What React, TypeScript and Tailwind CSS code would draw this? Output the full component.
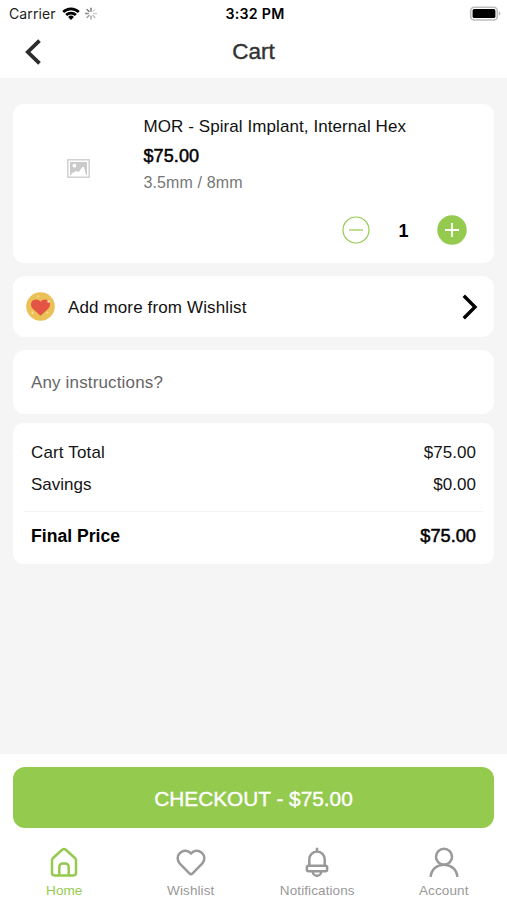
import { useState } from "react";

const PRICE = 75;

const money = (value: number) => `$${value.toFixed(2)}`;

function StatusBar() {
  return (
    <div className="grid h-[27px] grid-cols-3 items-center pr-[6px] pl-[9px] font-[Inter,sans-serif] text-[14px] text-[#222]">
      <div className="flex items-center">
        <span className="w-[53px] tracking-[0.1px]">Carrier</span>
        <svg className="h-[14px] w-[18px]" viewBox="0 0 18 14">
          <path d="M0.3 4.1a12.3 12.3 0 0 1 17.4 0l-1.8 1.9a9.8 9.8 0 0 0-13.8 0z" fill="#000" />
          <path d="M3.2 7.1a8.2 8.2 0 0 1 11.6 0l-1.9 1.9a5.5 5.5 0 0 0-7.8 0z" fill="#000" />
          <path d="M6.1 10a4.1 4.1 0 0 1 5.8 0L9 12.9z" fill="#000" />
        </svg>
        <svg className="ml-[4px] h-[14px] w-[14px]" viewBox="0 0 14 14" strokeWidth="1.4" strokeLinecap="round">
          <path d="M7 1.2v3" stroke="#777" />
          <path d="M10.9 2.6 9 4.5" stroke="#ddd" />
          <path d="M12.5 6.5H9.8" stroke="#ccc" />
          <path d="M10.9 10.4 9 8.5" stroke="#bbb" />
          <path d="M7 12V9.3" stroke="#aaa" />
          <path d="M3.1 10.4 5 8.5" stroke="#999" />
          <path d="M1.5 6.5h2.7" stroke="#888" />
          <path d="M3.1 2.6 5 4.5" stroke="#777" />
        </svg>
      </div>
      <span className="text-center text-[14.2px] font-semibold tracking-[0.25px] whitespace-nowrap text-black">3:32 PM</span>
      <svg className="h-[16px] w-[32px] justify-self-end" viewBox="0 0 32 16">
        <rect x="1.7" y="1.2" width="26.6" height="12.8" rx="3.6" fill="#fff" stroke="#bdbdbd" strokeWidth="1.6" />
        <rect x="3.6" y="3.1" width="22.8" height="9" rx="1.6" fill="#000" />
        <path d="M29.8 5.6v4c1.2-.3 1.6-1.1 1.6-2s-.4-1.7-1.6-2z" fill="#bbb" />
      </svg>
    </div>
  );
}

function Header() {
  return (
    <header className="grid h-[51px] grid-cols-3 items-center pb-[2px]">
      <button className="ml-[24px] w-fit" aria-label="Back">
        <svg className="block h-[28px] w-[18px]" viewBox="0 0 18 28" fill="none" stroke="#2d2d2d" strokeWidth="3.8">
          <path d="M15.5 2.6 3.8 14l11.7 11.4" />
        </svg>
      </button>
      <h1 className="pt-px text-center text-[22.5px] text-[#333] [-webkit-text-stroke:0.4px_#333]">Cart</h1>
    </header>
  );
}

function CartItem({ qty, onChange }: { qty: number; onChange: (qty: number) => void }) {
  return (
    <section className="flex h-[159px] rounded-[11px] bg-white">
      <div className="flex w-[130.5px] shrink-0 justify-center pt-[55px]">
        <svg className="h-[19px] w-[23px]" viewBox="0 0 23 19">
          <rect x="0.8" y="0.8" width="21.4" height="17.4" fill="#fff" stroke="#cacaca" strokeWidth="1.3" />
          <rect x="3" y="3" width="17" height="13" fill="#cacaca" />
          <circle cx="7.4" cy="6.7" r="1.9" fill="#fff" />
          <path d="M4.5 16v-1.6l4.8-2.4 2.4 1 4-5.2 1.4.7 2 7.5z" fill="#fff" />
        </svg>
      </div>
      <div className="flex flex-1 flex-col">
        <h2 className="mt-[11px] text-[17px] leading-[24px] tracking-[0.08px] text-[#111]">
          MOR - Spiral Implant, Internal Hex
        </h2>
        <p className="mt-[5px] text-[18px] leading-[24px] tracking-[0.1px] text-black [-webkit-text-stroke:0.5px_#000]">
          {money(PRICE)}
        </p>
        <p className="mt-[3px] text-[16px] leading-[24px] tracking-[0.12px] text-[#777]">3.5mm / 8mm</p>
        <div className="mt-[20px] mr-[27px] flex h-[30px] items-center justify-end">
          <button onClick={() => onChange(Math.max(1, qty - 1))} aria-label="Remove one">
            <svg className="block h-[28px] w-[28px]" viewBox="0 0 28 28" fill="none" stroke="#94ca4e">
              <circle cx="14" cy="14" r="13" strokeWidth="1.2" />
              <path d="M7 14h14" strokeWidth="1.2" />
            </svg>
          </button>
          <span className="w-[67px] pt-[2px] text-center text-[18px] font-bold text-black">{qty}</span>
          <button onClick={() => onChange(qty + 1)} aria-label="Add one">
            <svg className="block h-[30px] w-[30px]" viewBox="0 0 30 30">
              <circle cx="15" cy="15" r="14.7" fill="#94ca4e" />
              <path d="M8 15h14M15 8v14" stroke="#fff" strokeWidth="1.8" />
            </svg>
          </button>
        </div>
      </div>
    </section>
  );
}

function WishlistRow() {
  return (
    <button className="mt-[13px] flex h-[61px] w-full items-center rounded-[12px] bg-white pl-[13px] pr-[16px] text-left">
      <svg className="h-[29px] w-[29px]" viewBox="0 0 29 29">
        <circle cx="14.5" cy="14.5" r="14.3" fill="#ebc157" />
        <path
          d="M14.5 23.8 6.8 16.8C4.4 14.3 4.4 10.4 6.8 8.5c2.4-1.8 6-1.2 7.7 1.2 1.7-2.4 5.3-3 7.7-1.2 2.4 1.9 2.4 5.8 0 8.3z"
          fill="#e35445"
        />
        <g fill="#f6dda0">
          <circle cx="22.6" cy="9.4" r="1.3" />
          <circle cx="12" cy="4.5" r="1" />
          <circle cx="6.6" cy="20.8" r="1.2" />
          <circle cx="21.5" cy="20.8" r="1" />
        </g>
      </svg>
      <span className="ml-[13px] flex-1 pt-[2px] text-[17px] tracking-[0.13px] text-[#111]">Add more from Wishlist</span>
      <svg className="h-[26px] w-[16px]" viewBox="0 0 16 26" fill="none" stroke="#000" strokeWidth="3.4">
        <path d="M1.8 1.8 13 13 1.8 24.2" />
      </svg>
    </button>
  );
}

function Summary({ total }: { total: number }) {
  return (
    <section className="mt-[9px] h-[141px] rounded-[11px] bg-white px-[18px] pt-[14px] text-[17px] leading-[32px] text-[#151515]">
      <div className="flex justify-between">
        <span className="tracking-[0.15px]">Cart Total</span>
        <span className="tracking-[0.05px]">{money(total)}</span>
      </div>
      <div className="flex justify-between">
        <span>Savings</span>
        <span className="tracking-[0.05px]">{money(0)}</span>
      </div>
      <div className="-mx-[7px] mt-[10px] h-px bg-[#f3f3f3]" />
      <div className="mt-[8px] flex justify-between text-[17.6px] text-black">
        <span className="font-bold">Final Price</span>
        <span className="text-[18.2px] [-webkit-text-stroke:0.5px_#000]">{money(total)}</span>
      </div>
    </section>
  );
}

const TABS = [
  {
    label: "Home",
    icon: (
      <>
        <path d="M3 13.4c0-1 .4-1.8 1.1-2.4l9.1-8.2c1-.9 2.6-.9 3.6 0l9.1 8.2c.7.6 1.1 1.4 1.1 2.4v12.4a2.6 2.6 0 0 1-2.6 2.6H5.6A2.6 2.6 0 0 1 3 25.8z" />
        <path d="M10.3 28v-8.2a3.4 3.4 0 0 1 3.4-3.4h2.6a3.4 3.4 0 0 1 3.4 3.4V28" />
      </>
    ),
  },
  {
    label: "Wishlist",
    icon: (
      <path d="M15 6.6C12.3 3.1 7.5 3 4.3 5.7 1.1 8.7.8 13.2 3.6 16.4l9.8 10c.9.9 2.3.9 3.2 0l9.8-10c2.8-3.2 2.5-7.7-.7-10.7C22.5 3 17.7 3.1 15 6.6z" />
    ),
  },
  {
    label: "Notifications",
    icon: (
      <>
        <path d="M15 .8v3.8M7.3 18.8v-6.5a7.7 7.7 0 0 1 15.4 0v6.5" />
        <rect x="4.9" y="18.8" width="20.2" height="5.4" rx="1.5" />
        <path d="M10.8 24.4a4.2 4.4 0 0 0 8.4 0" />
      </>
    ),
  },
  {
    label: "Account",
    icon: (
      <>
        <circle cx="15" cy="9.8" r="8" />
        <path d="M1.7 29.8c.5-7.3 6.2-12 13.3-12s12.8 4.7 13.3 12" />
      </>
    ),
  },
];

function TabBar() {
  const [active, setActive] = useState("Home");

  return (
    <nav className="mt-[19px] grid grid-cols-4">
      {TABS.map((tab) => (
        <button
          key={tab.label}
          onClick={() => setActive(tab.label)}
          className={`flex flex-col items-center ${tab.label === active ? "text-[#94ca4e]" : "text-[#999]"}`}
        >
          <svg className="h-[30px] w-[30px]" viewBox="0 0 30 30" fill="none" stroke="currentColor" strokeWidth="2.5" strokeLinejoin="round">
            {tab.icon}
          </svg>
          <span className="mt-[6px] text-[13.5px] leading-[16px] tracking-[0.1px]">{tab.label}</span>
        </button>
      ))}
    </nav>
  );
}

export default function App() {
  const [qty, setQty] = useState(1);
  const total = PRICE * qty;

  return (
    <div className="flex h-[900px] w-full flex-col overflow-hidden bg-white font-['Liberation_Sans',Arial,sans-serif]">
      <StatusBar />
      <Header />
      <main className="flex-1 bg-[#f5f5f5] px-[13px] pt-[26px]">
        <CartItem qty={qty} onChange={setQty} />
        <WishlistRow />
        <input
          className="mt-[13px] block h-[64px] w-full rounded-[12px] bg-white px-[18px] pt-[2px] text-[17px] tracking-[0.15px] outline-none placeholder:text-[#666]"
          placeholder="Any instructions?"
        />
        <Summary total={total} />
      </main>
      <footer className="h-[146px] px-[13px] pt-[13px]">
        <button className="h-[61px] w-full rounded-[12px] bg-[#94ca4e] pt-[2px] text-[20.8px] text-white [-webkit-text-stroke:0.4px_#fff]">
          CHECKOUT - {money(total)}
        </button>
        <div className="-mr-[13px] -ml-[12px]">
          <TabBar />
        </div>
      </footer>
    </div>
  );
}
